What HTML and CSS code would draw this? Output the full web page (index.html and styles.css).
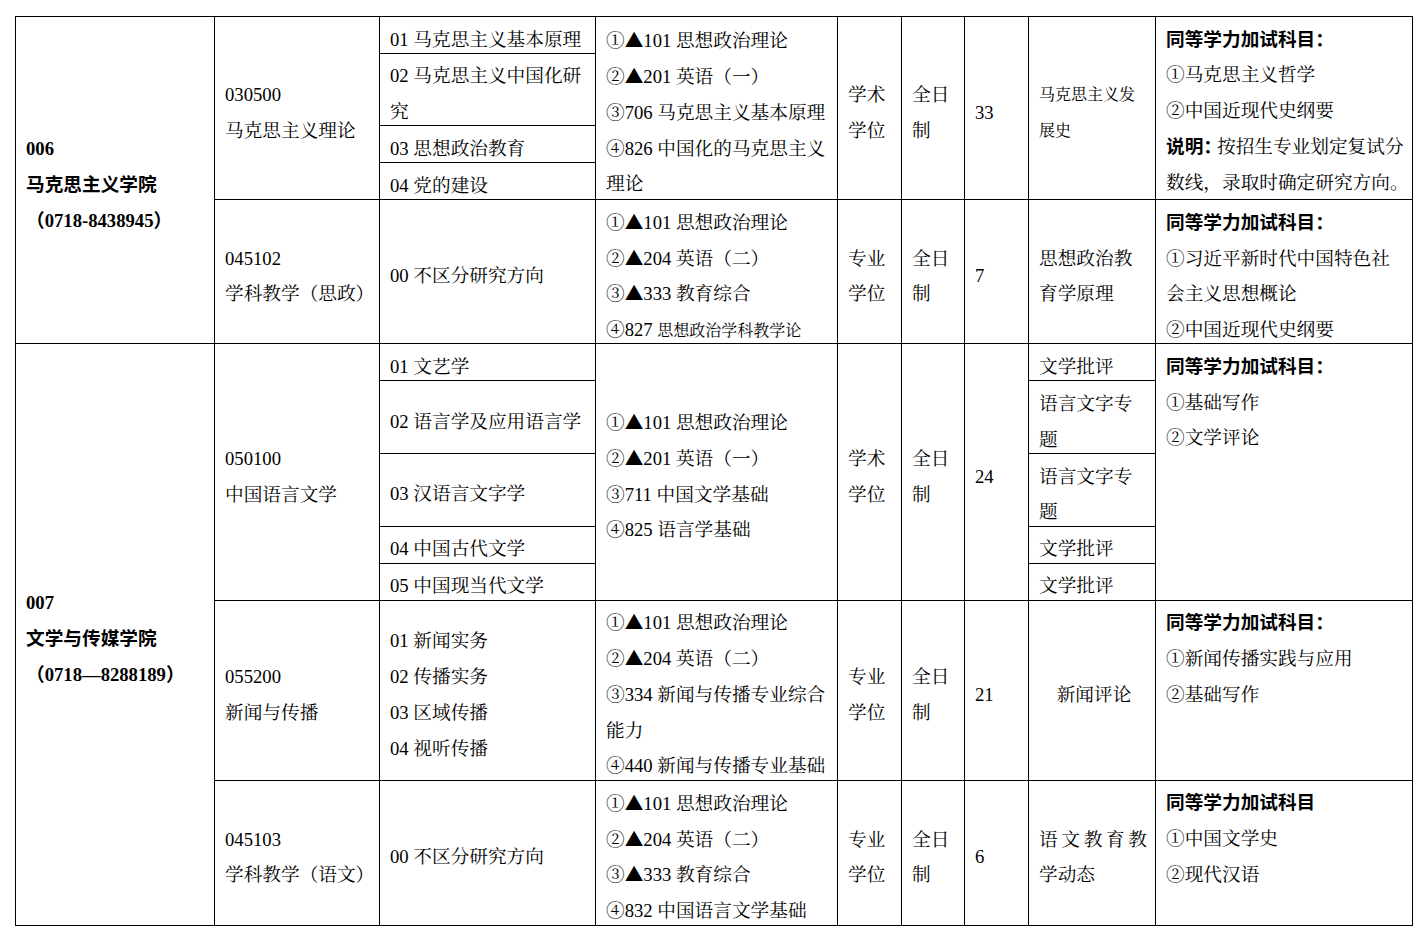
FILE: index.html
```html
<!DOCTYPE html>
<html lang="zh-CN">
<head>
<meta charset="utf-8">
<title>招生专业目录</title>
<link rel="stylesheet" href="styles.css">
</head>
<body>
<table class="plan">
  <colgroup>
    <col class="c-dept"><col class="c-major"><col class="c-dir"><col class="c-exam"><col class="c-type"><col class="c-mode"><col class="c-num"><col class="c-ref"><col class="c-note">
  </colgroup>
  <tbody>
    <tr class="h36">
      <td rowspan="5"><div class="in"><b>006</b><br><b>马克思主义学院</b><br><b>（0718-8438945）</b></div></td>
      <td rowspan="4"><div class="in">030500<br>马克思主义理论</div></td>
      <td><div class="in">01 马克思主义基本原理</div></td>
      <td rowspan="4"><div class="in">①<span class="tri">▲</span>101 思想政治理论<br>②<span class="tri">▲</span>201 英语（一）<br>③706 马克思主义基本原理<br>④826 中国化的马克思主义<br>理论</div></td>
      <td rowspan="4"><div class="in">学术<br>学位</div></td>
      <td rowspan="4"><div class="in">全日<br>制</div></td>
      <td rowspan="4"><div class="in">33</div></td>
      <td rowspan="4" class="ref"><div class="in small">马克思主义发<br>展史</div></td>
      <td rowspan="4" class="note"><div class="in"><b>同等学力加试科目<span class="half">：</span></b><br>①马克思主义哲学<br>②中国近现代史纲要<br><b>说明<span class="half">：</span></b>按招生专业划定复试分<br>数线，录取时确定研究方向。</div></td>
    </tr>
    <tr class="h72"><td><div class="in">02 马克思主义中国化研<br>究</div></td></tr>
    <tr class="h37"><td><div class="in">03 思想政治教育</div></td></tr>
    <tr class="h37"><td><div class="in">04 党的建设</div></td></tr>
    <tr class="h144">
      <td><div class="in">045102<br>学科教学（思政）</div></td>
      <td><div class="in">00 不区分研究方向</div></td>
      <td><div class="in">①<span class="tri">▲</span>101 思想政治理论<br>②<span class="tri">▲</span>204 英语（二）<br>③<span class="tri">▲</span>333 教育综合<br>④827 <span class="small">思想政治学科教学论</span></div></td>
      <td><div class="in">专业<br>学位</div></td>
      <td><div class="in">全日<br>制</div></td>
      <td><div class="in">7</div></td>
      <td class="ref"><div class="in">思想政治教<br>育学原理</div></td>
      <td class="note"><div class="in"><b>同等学力加试科目<span class="half">：</span></b><br>①习近平新时代中国特色社<br>会主义思想概论<br>②中国近现代史纲要</div></td>
    </tr>
    <tr class="h37">
      <td rowspan="7"><div class="in"><b>007</b><br><b>文学与传媒学院</b><br><b>（0718—8288189）</b></div></td>
      <td rowspan="5"><div class="in">050100<br>中国语言文学</div></td>
      <td><div class="in">01 文艺学</div></td>
      <td rowspan="5"><div class="in">①<span class="tri">▲</span>101 思想政治理论<br>②<span class="tri">▲</span>201 英语（一）<br>③711 中国文学基础<br>④825 语言学基础</div></td>
      <td rowspan="5"><div class="in">学术<br>学位</div></td>
      <td rowspan="5"><div class="in">全日<br>制</div></td>
      <td rowspan="5"><div class="in">24</div></td>
      <td class="ref"><div class="in">文学批评</div></td>
      <td rowspan="5" class="note"><div class="in"><b>同等学力加试科目<span class="half">：</span></b><br>①基础写作<br>②文学评论</div></td>
    </tr>
    <tr class="h72">
      <td><div class="in">02 语言学及应用语言学</div></td>
      <td class="ref"><div class="in">语言文字专<br>题</div></td>
    </tr>
    <tr class="h73">
      <td><div class="in">03 汉语言文字学</div></td>
      <td class="ref"><div class="in">语言文字专<br>题</div></td>
    </tr>
    <tr class="h37">
      <td><div class="in">04 中国古代文学</div></td>
      <td class="ref"><div class="in">文学批评</div></td>
    </tr>
    <tr class="h37">
      <td><div class="in">05 中国现当代文学</div></td>
      <td class="ref"><div class="in">文学批评</div></td>
    </tr>
    <tr class="h180">
      <td><div class="in">055200<br>新闻与传播</div></td>
      <td><div class="in">01 新闻实务<br>02 传播实务<br>03 区域传播<br>04 视听传播</div></td>
      <td><div class="in">①<span class="tri">▲</span>101 思想政治理论<br>②<span class="tri">▲</span>204 英语（二）<br>③334 新闻与传播专业综合<br>能力<br>④440 新闻与传播专业基础</div></td>
      <td><div class="in">专业<br>学位</div></td>
      <td><div class="in">全日<br>制</div></td>
      <td><div class="in">21</div></td>
      <td class="ref center"><div class="in">新闻评论</div></td>
      <td class="note"><div class="in"><b>同等学力加试科目<span class="half">：</span></b><br>①新闻传播实践与应用<br>②基础写作</div></td>
    </tr>
    <tr class="h145">
      <td><div class="in">045103<br>学科教学（语文）</div></td>
      <td><div class="in">00 不区分研究方向</div></td>
      <td><div class="in">①<span class="tri">▲</span>101 思想政治理论<br>②<span class="tri">▲</span>204 英语（二）<br>③<span class="tri">▲</span>333 教育综合<br>④832 中国语言文学基础</div></td>
      <td><div class="in">专业<br>学位</div></td>
      <td><div class="in">全日<br>制</div></td>
      <td><div class="in">6</div></td>
      <td class="ref"><div class="in"><div class="spread">语文教育教</div>学动态</div></td>
      <td class="note"><div class="in"><b>同等学力加试科目</b><br>①中国文学史<br>②现代汉语</div></td>
    </tr>
  </tbody>
</table>
</body>
</html>
```

FILE: styles.css
```css
html, body {
  margin: 0;
  padding: 0;
  background: #ffffff;
}

body {
  font-family: "Liberation Serif", "Noto Serif CJK SC", "Noto Sans CJK SC", serif;
  font-size: 18.67px;
  color: #000000;
}

.plan {
  border-collapse: collapse;
  table-layout: fixed;
  width: 1398px;
  margin: 16px 0 0 15px;
}

.c-dept { width: 199px; }
.c-major { width: 165px; }
.c-dir { width: 216px; }
.c-exam { width: 242px; }
.c-type { width: 64px; }
.c-mode { width: 63px; }
.c-num { width: 64px; }
.c-ref { width: 127px; }
.c-note { width: 257px; }

.h36 { height: 36px; }
.h37 { height: 37px; }
.h72 { height: 72px; }
.h73 { height: 73px; }
.h144 { height: 144px; }
.h145 { height: 145px; }
.h180 { height: 180px; }

.plan td {
  border: 1px solid #000000;
  padding: 0 4px 0 10px;
  vertical-align: middle;
  text-align: left;
  line-height: 35.75px;
  white-space: nowrap;
}

.plan td.note {
  vertical-align: top;
  padding-left: 10px;
  padding-right: 2px;
}

.plan td.ref {
  padding-left: 10px;
  padding-right: 8px;
}

.plan td.center {
  text-align: center;
  padding-left: 8px;
  padding-right: 4px;
}

.in {
  padding-top: 4.5px;
  margin-bottom: -4.5px;
}

.small {
  font-size: 16px;
}

span.small {
  line-height: 16px;
}

.tri {
  font-family: "Noto Sans CJK SC", sans-serif;
  line-height: 16px;
}

.half {
  letter-spacing: -5px;
}

.spread {
  white-space: normal;
  text-align: justify;
  text-align-last: justify;
}

b {
  font-family: "Liberation Serif", "Noto Sans CJK SC", sans-serif;
  font-weight: 700;
}
```
